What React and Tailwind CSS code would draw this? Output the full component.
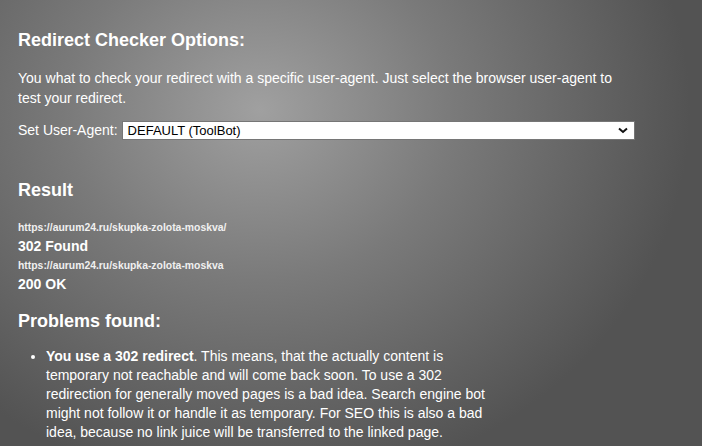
import React from "react";

export default function App() {
  return (
    <div
      className="w-[702px] h-[446px] overflow-hidden text-white bg-[radial-gradient(ellipse_430px_380px_at_260px_110px,#a0a0a0_0%,#7a7a7a_45%,#535353_100%)]"
      style={{ fontFamily: '"Liberation Sans", Arial, sans-serif' }}
    >
      <div className="pl-[18px] pt-[29px]">
        <h3 className="text-[18px] leading-[22px] font-bold">Redirect Checker Options:</h3>
        <p className="mt-[17px] text-[14px] leading-[20px] w-[610px]">
          You what to check your redirect with a specific user-agent. Just select the browser user-agent to test your redirect.
        </p>
        <div className="mt-[12px] flex items-center text-[14px]">
          <span className="mr-[4px]">Set User-Agent:</span>
          <div className="relative w-[513px] h-[19px] bg-white border border-[#767676] text-black text-[13px] leading-[17px] pl-[5px]">
            DEFAULT (ToolBot)
            <svg className="absolute right-[6px] top-[5px]" width="10" height="7" viewBox="0 0 10 7">
              <path d="M1 1.5 L5 5 L9 1.5" stroke="#111" strokeWidth="2" fill="none" />
            </svg>
          </div>
        </div>

        <h3 className="mt-[38px] text-[18px] leading-[22px] font-bold">Result</h3>
        <div className="mt-[19px] text-[10.4px] leading-[16px] font-bold text-[#f0f0f0]">https://aurum24.ru/skupka-zolota-moskva/</div>
        <div className="text-[14px] leading-[20px] font-bold">302 Found</div>
        <div className="mt-[2px] text-[10.4px] leading-[16px] font-bold text-[#f0f0f0]">https://aurum24.ru/skupka-zolota-moskva</div>
        <div className="text-[14px] leading-[20px] font-bold">200 OK</div>

        <h3 className="mt-[16px] text-[18px] leading-[22px] font-bold">Problems found:</h3>
        <ul className="mt-[15px] list-disc pl-[28px] w-[478px] text-[14px] leading-[19px]">
          <li>
            <b>You use a 302 redirect</b>. This means, that the actually content is temporary not reachable and will come back soon. To use a 302 redirection for generally moved pages is a bad idea. Search engine bot might not follow it or handle it as temporary. For SEO this is also a bad idea, because no link juice will be transferred to the linked page.
          </li>
        </ul>
      </div>
    </div>
  );
}
